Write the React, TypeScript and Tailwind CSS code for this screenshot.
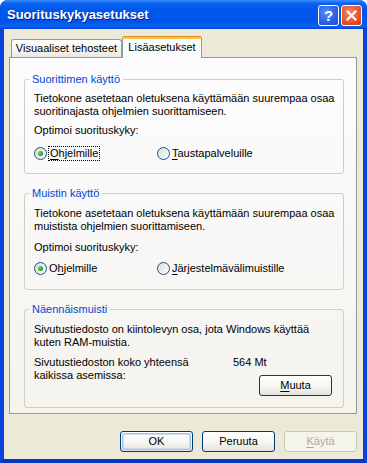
import React from 'react';

const sans = "font-['Liberation_Sans',Arial,sans-serif]";

function Radio({ checked }: { checked?: boolean }) {
  return (
    <span className="inline-flex h-[13px] w-[13px] shrink-0 items-center justify-center rounded-full border border-[#1C5180] bg-[linear-gradient(135deg,#DCDCD7,#FFFFFF)]">
      {checked && (
        <span className="h-[5px] w-[5px] rounded-full bg-[radial-gradient(circle_at_35%_35%,#6BE06B,#21A121_60%,#1A8A1A)]" />
      )}
    </span>
  );
}

function Key({ children }: { children: React.ReactNode }) {
  return <span className="underline underline-offset-[2px]">{children}</span>;
}

function Group({
  title,
  className,
  children,
}: {
  title: string;
  className: string;
  children: React.ReactNode;
}) {
  return (
    <fieldset className={`whitespace-nowrap rounded-[3px] border border-[#D0D0BF] px-[9px] pt-[6px] ${className}`}>
      <legend className="-ml-[5px] px-[3px] leading-[13px] text-[#0046D5]">{title}</legend>
      {children}
    </fieldset>
  );
}

function XpButton({
  children,
  primary,
  disabled,
}: {
  children: React.ReactNode;
  primary?: boolean;
  disabled?: boolean;
}) {
  if (disabled) {
    return (
      <div className="flex h-[21px] w-[73px] items-center justify-center rounded-[3px] border border-[#C9C7BA] bg-[#F5F4EA] text-[#ACA899]">
        {children}
      </div>
    );
  }
  return (
    <div className="flex h-[21px] w-[73px] items-center justify-center rounded-[3px] border border-[#003C74] bg-[linear-gradient(to_bottom,#FFFFFF,#F4F4F0_60%,#E3E2DA)] p-px">
      <div
        className={`flex h-full w-full items-center justify-center rounded-[2px] ${
          primary ? 'shadow-[inset_0_0_0_1px_#A8C4EE,inset_0_0_0_2px_#CEDCF5]' : ''
        }`}
      >
        {children}
      </div>
    </div>
  );
}

export default function App() {
  return (
    <div className={`${sans} flex h-[463px] w-[367px] flex-col overflow-hidden rounded-t-[8px] bg-[#0831D9] text-[11px] leading-[13px] text-black`}>
      {/* Title bar */}
      <div className="flex h-[29px] shrink-0 items-center bg-[linear-gradient(to_bottom,#3A8CFF_0%,#0A63F0_12%,#0058EE_30%,#0055E8_75%,#0A62F2_92%,#003DD0_100%)] pl-[7px] pr-[5px]">
        <span className="flex-1 text-[13px] font-bold text-white [text-shadow:1px_1px_0_#0A1E7A]">
          Suorituskykyasetukset
        </span>
        <div className="flex gap-[2px] pt-[1px]">
          <div className="flex h-[21px] w-[21px] items-center justify-center rounded-[3px] border border-white bg-[radial-gradient(circle_at_40%_35%,#5D8EF5,#2D5FE0_60%,#1C48C8)] text-[15px] font-bold text-white">
            ?
          </div>
          <div className="flex h-[21px] w-[21px] items-center justify-center rounded-[3px] border border-white bg-[radial-gradient(circle_at_40%_35%,#F08A66,#E0542C_60%,#C53A15)]">
            <svg width="11" height="11" viewBox="0 0 11 11">
              <path d="M1.5 1.5 L9.5 9.5 M9.5 1.5 L1.5 9.5" stroke="white" strokeWidth="2.2" strokeLinecap="square" />
            </svg>
          </div>
        </div>
      </div>

      {/* Body */}
      <div className="flex flex-1 flex-col border-x-[4px] border-b-[4px] border-x-[#0843DC] border-b-[#0636C4] bg-[#ECE9D8]">
        {/* Tabs */}
        <div className="ml-[5px] mt-[7px] flex items-end pl-[2px]">
          <div className="flex h-[18px] w-[111px] items-center justify-center rounded-t-[3px] border border-b-0 border-[#919B9C] bg-[linear-gradient(to_bottom,#FFFFFF,#F3F3EF_70%,#E8E7E0)]">
            Visuaaliset tehosteet
          </div>
          <div className="relative z-10 -mb-px flex h-[22px] w-[80px] flex-col rounded-t-[3px] border-x border-[#919B9C] bg-[#FCFCFE]">
            <div className="h-[1px] rounded-t-[3px] bg-[#E68B2C]" />
            <div className="h-[2px] bg-[#FFC73C]" />
            <div className="flex flex-1 items-center justify-center pb-[2px]">Lisäasetukset</div>
          </div>
        </div>

        {/* Tab panel */}
        <div className="ml-[5px] flex h-[357px] w-[348px] flex-col gap-[13px] border border-[#919B9C] bg-[linear-gradient(to_bottom,#FCFCFE,#F4F3EE)] pl-[14px] pt-[15px]">
          <Group title="Suorittimen käyttö" className="h-[101px] w-[320px]">
            <p>
              Tietokone asetetaan oletuksena käyttämään suurempaa osaa
              <br />
              suoritinajasta ohjelmien suorittamiseen.
            </p>
            <p className="mt-[6px]">Optimoi suorituskyky:</p>
            <div className="mt-[9px] flex items-center">
              <div className="flex w-[123px] items-center gap-[1px]">
                <Radio checked />
                <span className="border border-dotted border-black px-[1px]">
                  <Key>O</Key>hjelmille
                </span>
              </div>
              <div className="flex items-center gap-[2px]">
                <Radio />
                <span>
                  <Key>T</Key>austapalveluille
                </span>
              </div>
            </div>
          </Group>

          <Group title="Muistin käyttö" className="h-[103px] w-[320px]">
            <p className="pt-[1px]">
              Tietokone asetetaan oletuksena käyttämään suurempaa osaa
              <br />
              muistista ohjelmien suorittamiseen.
            </p>
            <p className="mt-[8px]">Optimoi suorituskyky:</p>
            <div className="mt-[8px] flex items-center">
              <div className="flex w-[123px] items-center gap-[2px]">
                <Radio checked />
                <span>
                  O<Key>h</Key>jelmille
                </span>
              </div>
              <div className="flex items-center gap-[2px]">
                <Radio />
                <span>
                  <Key>J</Key>ärjestelmävälimuistille
                </span>
              </div>
            </div>
          </Group>

          <Group title="Näennäismuisti" className="h-[105px] w-[320px]">
            <p className="pt-[1px]">
              Sivutustiedosto on kiintolevyn osa, jota Windows käyttää
              <br />
              kuten RAM-muistia.
            </p>
            <div className="mt-[7px] flex">
              <p className="w-[199px]">
                Sivutustiedoston koko yhteensä
                <br />
                kaikissa asemissa:
              </p>
              <p>564 Mt</p>
            </div>
            <div className="-mt-[7px] flex justify-end pr-[2px]">
              <XpButton>
                <span>
                  <Key>M</Key>uuta
                </span>
              </XpButton>
            </div>
          </Group>
        </div>

        {/* Dialog buttons */}
        <div className="mt-[17px] flex justify-end gap-[9px] pr-[6px]">
          <XpButton primary>OK</XpButton>
          <XpButton>Peruuta</XpButton>
          <XpButton disabled>
            <span>
              <Key>K</Key>äytä
            </span>
          </XpButton>
        </div>
      </div>
    </div>
  );
}
